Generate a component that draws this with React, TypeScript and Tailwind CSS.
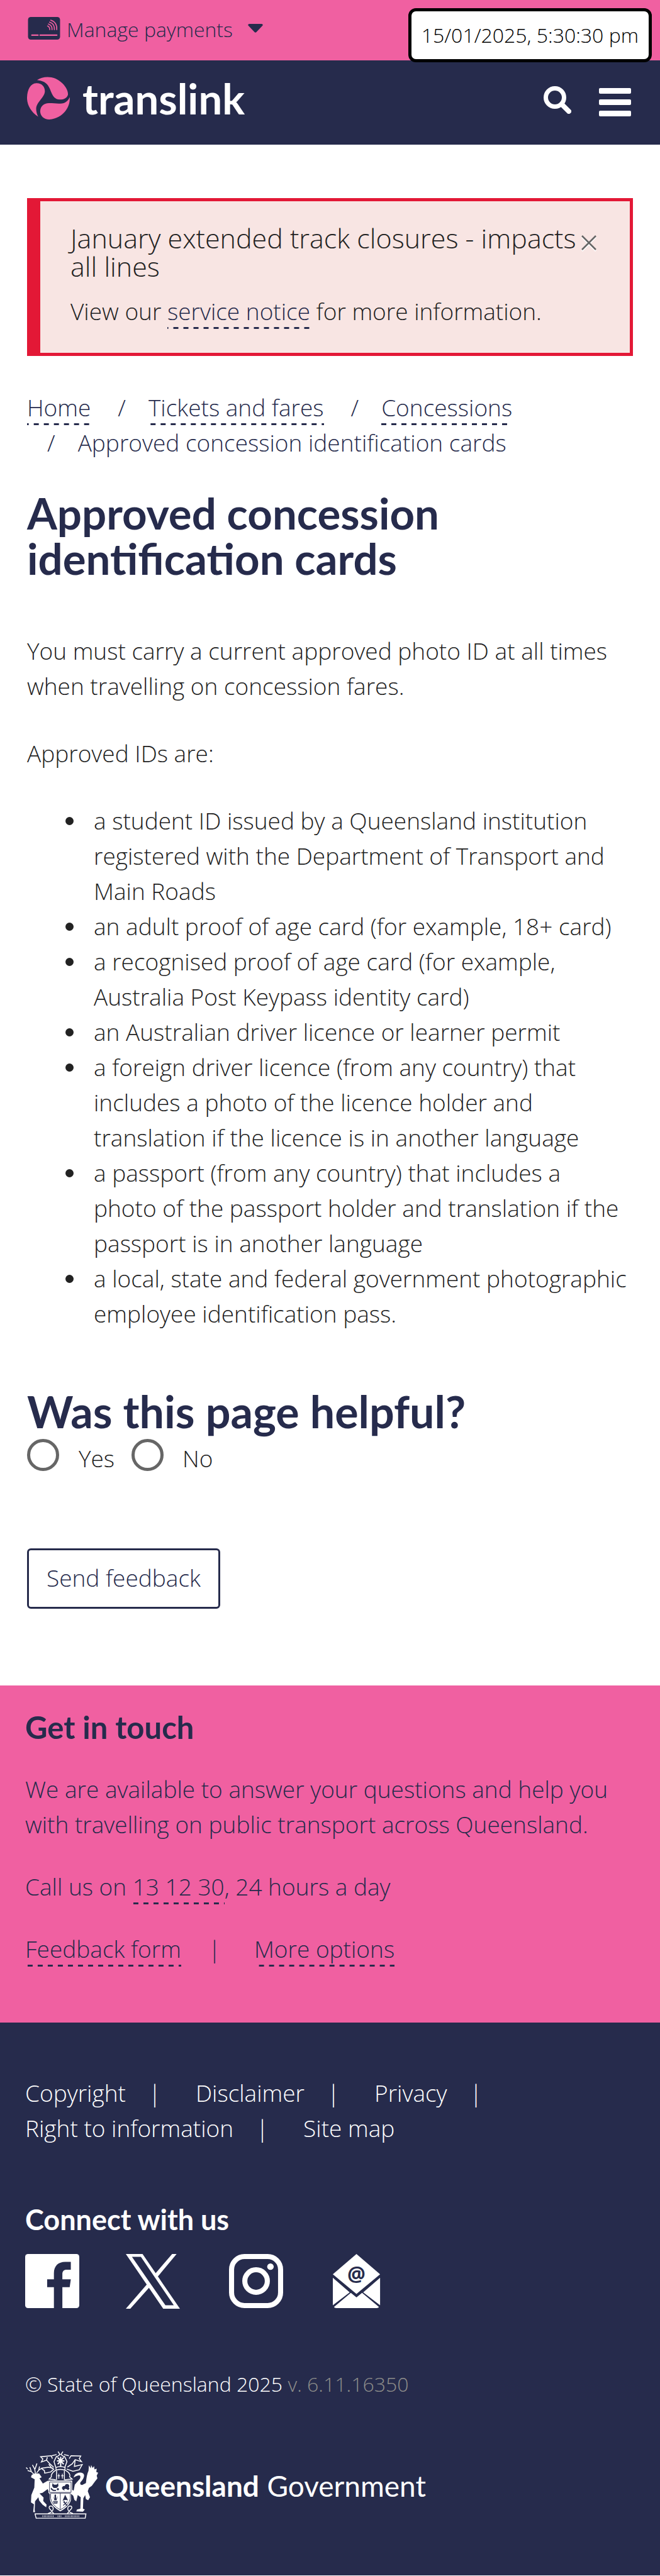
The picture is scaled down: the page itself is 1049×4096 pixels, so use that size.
import React from "react";

const dash =
  "bg-[linear-gradient(90deg,#262b4c_50%,transparent_50%)] bg-[length:16px_3px] bg-repeat-x bg-bottom pb-[3px]";

function Link({ children, href = "#" }: { children: React.ReactNode; href?: string }) {
  return (
    <a href={href} className={"text-[#262b4c] " + dash}>
      {children}
    </a>
  );
}

function PaymentIcon() {
  return (
    <svg viewBox="0 0 58 41" className="h-9 w-[52px]" aria-hidden="true">
      <rect width="58" height="41" rx="5" fill="#262b4c" />
      <g fill="none" stroke="#f060a1" strokeWidth="1.8" strokeLinecap="round">
        <path d="M35.300 16.300Q39.500 18 39.300 23M37 12.700Q44 15 43.500 23M39 9.300Q48.500 12 47.700 23M41 5.700Q53 9.500 52 23" />
      </g>
      <path d="M7 33h11M22 33h30" stroke="#f060a1" strokeWidth="2.6" strokeLinecap="round" />
    </svg>
  );
}

function TranslinkMark() {
  return (
    <svg viewBox="0 0 231 231" className="h-17 w-17" aria-hidden="true" fill="#f060a1">
      <path d="M54 18C90 -6 150 -6 190 35C216 60 224 88 220 100C212 118 195 124 175 123C150 121 140 106 130 82C118 52 108 24 54 18Z" />
      <path d="M60 216C20 190 -2 150 0 110C2 70 18 36 50 35C80 34 98 55 96 82C93 108 58 135 51 160C46 178 52 200 60 216Z" />
      <path d="M230 110C236 150 205 225 120 231C90 231 70 210 71 185C73 160 90 144 118 143C160 142 210 160 230 110Z" />
    </svg>
  );
}

function Crest() {
  return (
    <svg viewBox="54 62 394 366" className="h-27 w-[117px]" aria-hidden="true" fill="#fff">
      <path d="M96 392L100 350L84 340L86 300L102 260L104 215L84 204L88 192L104 184L128 184L142 204L130 210L148 238L176 222L188 262L186 300L174 268L146 288L130 292L152 314L150 332L168 352L166 366L146 352L128 330L124 312L106 334L104 380L106 392Z" />
      <path
        d="M100 188L86 174L66 168M86 174L78 150M66 160L58 152M108 184L104 160L92 138M106 160L116 130M114 182L126 166L130 146M126 166L138 158"
        fill="none"
        stroke="#fff"
        strokeWidth="5"
      />
      <path d="M314 206Q318 186 340 180Q364 176 370 192Q372 210 350 232Q346 246 360 246L380 236Q384 190 394 170L396 140L406 156L408 138L416 154L424 144L426 162L438 158L436 176L446 180L438 196L442 210L428 228L412 250L396 262L390 280L402 312L392 328L380 322L376 300L366 318L364 374L374 378L364 390L328 388L332 378L350 374L352 312L336 300L328 334L318 326L312 304L296 290L302 270L314 276L320 244L348 212Q354 196 344 194Q330 194 314 206Z" />
      <path d="M178 222H306V290H300V320Q298 356 242 388Q188 356 186 320V290H178Z" />
      <path
        d="M184 230H300V286H184ZM190 290H296M242 290V380M190 292V318Q196 354 242 380Q290 354 296 318V292"
        fill="none"
        stroke="#262b4c"
        strokeWidth="3"
      />
      <g fill="#262b4c">
        <path d="M200 236L208 244H222L230 236L232 252L222 262H206L198 252Z" />
        <path d="M194 260Q200 274 220 272L218 278Q196 280 190 266Z" />
        <circle cx="229" cy="269" r="6" />
        <path d="M250 262Q256 248 266 252Q270 238 284 242Q294 248 288 260L292 266L284 274Q272 262 262 270L268 276L256 272Z" />
        <path d="M204 304L210 328H222L228 304L219 322V300L215 296L211 300V322Z" />
        <path d="M203 332H228L226 346H206Z" />
        <path d="M268 298L284 330Q266 322 254 332Z" />
      </g>
      <path d="M258 336L280 356M280 336L258 356M262 332L276 358" stroke="#262b4c" strokeWidth="4" />
      <path d="M206 338H224" stroke="#fff" strokeWidth="3" />
      <g fill="none" stroke="#fff" strokeWidth="5">
        <path d="M230 66L240 82L222 96M256 66L246 82L264 96M222 82L196 88M262 82L288 88" />
        <path d="M222 90L208 120L218 152M264 90L278 120L266 152M218 152Q242 142 268 152L266 166Q242 158 220 166Z" />
        <path d="M200 104L192 88L136 94L148 106L140 122L168 112L186 132L206 150M290 104L300 88L352 90L344 104L356 120L322 110L306 132L280 150" />
        <path d="M168 112L172 96M322 110L318 146L360 136L344 164L310 172L276 160M180 134L200 160M138 156L178 150L206 156M138 156L156 168L158 182L190 176L208 160" />
        <path d="M218 166Q190 184 194 202L182 214L218 218M268 166Q300 184 292 202L306 214L266 218M222 170V220M264 170V220" />
        <path d="M234 186V212M228 196H240M253 186V212M247 196H259" strokeWidth="4" />
        <path d="M228 98L260 134M260 98L228 134M244 94V146M224 116H264" strokeWidth="7" />
        <path d="M176 400Q204 390 204 372Q200 356 186 360Q176 368 190 380L206 400M310 400Q282 390 282 372Q286 356 300 360Q310 368 296 380L280 400" />
        <path d="M106 402H380L376 425H112Z" />
      </g>
      <path
        d="M146 414H206M228 414H250M268 414H348"
        fill="none"
        stroke="#fff"
        strokeWidth="9"
        strokeDasharray="3 5"
      />
    </svg>
  );
}

const ids = [
  "a student ID issued by a Queensland institution registered with the Department of Transport and Main Roads",
  "an adult proof of age card (for example, 18+ card)",
  "a recognised proof of age card (for example, Australia Post Keypass identity card)",
  "an Australian driver licence or learner permit",
  "a foreign driver licence (from any country) that includes a photo of the licence holder and translation if the licence is in another language",
  "a passport (from any country) that includes a\nphoto of the passport holder and translation if the passport is in another language",
  "a local, state and federal government photographic employee identification pass.",
];

export default function App() {
  return (
    <div className="relative bg-white font-['Open_Sans',sans-serif] text-[37px] leading-[56px] font-light text-[#222]">
      <div className="flex h-24 items-center bg-[#f060a1] px-11 pb-[6px] text-[32px] text-[#262b4c]">
        <button type="button" className="flex items-center font-light">
          <PaymentIcon />
          <span className="ml-[10px] pt-1">Manage payments</span>
          <svg viewBox="0 0 24 14" className="ml-6 h-[14px] w-6" aria-hidden="true">
            <path d="M2 0h20q3 1 1 3L13.500 13q-1.500 1.500-3 0L1 3Q-1 1 2 0Z" fill="#262b4c" />
          </svg>
        </button>
      </div>
      <div className="absolute top-[13px] right-[13px] rounded-xl border-[5px] border-black bg-white px-4 py-[10px] text-[32px] text-black">
        15/01/2025, 5:30:30 pm
      </div>

      <header className="flex h-[134px] items-center justify-between bg-[#262b4c] pr-[46px] pb-[14px] pl-[43px]">
        <a href="#" className="flex items-center gap-5 text-white">
          <TranslinkMark />
          <span className="font-['Lato',sans-serif] text-[67px] leading-none font-bold">translink</span>
        </a>
        <div className="flex items-center gap-11 pt-3">
          <button type="button" aria-label="Search" className="pb-[6px]">
            <svg viewBox="0 0 44 44" className="h-11 w-11" fill="none" stroke="#fff" aria-hidden="true">
              <circle cx="18" cy="18" r="14.500" strokeWidth="7" />
              <path d="M29 29L40 40" strokeWidth="8" strokeLinecap="round" />
            </svg>
          </button>
          <button type="button" aria-label="Menu" className="flex flex-col gap-[9px]">
            <span className="h-[9px] w-[51px] rounded-xs bg-white" />
            <span className="h-[9px] w-[51px] rounded-xs bg-white" />
            <span className="h-[9px] w-[51px] rounded-xs bg-white" />
          </button>
        </div>
      </header>

      <main className="px-[43px] pt-[85px]">
        <section className="flex items-start justify-between border-[5px] border-l-[21px] border-[#e31836] bg-[#f8e5e3] pt-9 pr-[53px] pb-[38px] pl-12">
          <div>
            <h2 className="text-[43px] leading-[45px]">January extended track closures - impacts all lines</h2>
            <p className="mt-[21px]">
              View our <Link>service notice</Link> for more information.
            </p>
          </div>
          <button type="button" aria-label="Close" className="mt-[18px]">
            <svg viewBox="0 0 24 26" className="h-[26px] w-6" fill="none" strokeWidth="2.500" aria-hidden="true">
              <path d="M1 3L23 25M23 3L1 25" stroke="#fff" />
              <path d="M1 1L23 23M23 1L1 23" stroke="#666" />
            </svg>
          </button>
        </section>

        <nav aria-label="Breadcrumb" className="mt-[54px]">
          <ol className="flex flex-wrap gap-x-[11px] text-[#262b4c]">
            <li>
              <Link>Home</Link>
            </li>
            <li className="pl-8">
              <span className="pr-9">/</span>
              <Link>Tickets and fares</Link>
            </li>
            <li className="pl-8">
              <span className="pr-9">/</span>
              <Link>Concessions</Link>
            </li>
            <li className="pl-8">
              <span className="pr-9">/</span>Approved concession identification cards
            </li>
          </ol>
        </nav>

        <h1 className="mt-12 max-w-[800px] font-['Lato',sans-serif] text-[69px] leading-[72px] font-bold text-[#262b4c]">
          Approved concession identification cards
        </h1>

        <p className="mt-[83px]">
          You must carry a current approved photo ID at all times when travelling on concession fares.
        </p>
        <p className="mt-[51px]">Approved IDs are:</p>
        <ul className="mt-[51px] pl-[61px]">
          {ids.map((t) => (
            <li key={t} className="flex gap-8 whitespace-pre-line">
              <span className="mt-[22px] h-[13px] w-[13px] shrink-0 rounded-full bg-[#222]" />
              <span>{t}</span>
            </li>
          ))}
        </ul>

        <form className="pb-[122px]">
          <fieldset>
            <legend className="pt-[91px] font-['Lato',sans-serif] text-[70px] leading-[72px] font-bold text-[#262b4c]">
              Was this page helpful?
            </legend>
            <div className="flex items-start pt-2">
              <input id="yes" name="helpful" type="radio" className="h-[51px] w-[51px] appearance-none rounded-full border-[5px] border-[#666]" />
              <label htmlFor="yes" className="pt-[3px] pr-[27px] pl-[31px]">Yes</label>
              <input id="no" name="helpful" type="radio" className="h-[51px] w-[51px] appearance-none rounded-full border-[5px] border-[#666]" />
              <label htmlFor="no" className="pt-[3px] pl-[30px]">No</label>
            </div>
          </fieldset>
          <button type="button" className="mt-[115px] rounded-md border-[3px] border-[#262b4c] px-7 pt-4 pb-[18px] font-light text-[#262b4c]">
            Send feedback
          </button>
        </form>
      </main>

      <section className="bg-[#f060a1] px-10 pt-9 pb-[89px] text-[#262b4c]">
        <h2 className="font-['Lato',sans-serif] text-[49px] leading-[60px] font-bold">Get in touch</h2>
        <p className="mt-[41px]">
          We are available to answer your questions and help you with travelling on public transport across Queensland.
        </p>
        <p className="mt-[43px]">
          Call us on <Link>13 12 30</Link>, 24 hours a day
        </p>
        <p className="mt-[43px] flex">
          <span><Link>Feedback form</Link></span>
          <span className="pr-[53px] pl-[43px]">|</span>
          <span><Link>More options</Link></span>
        </p>
      </section>

      <footer className="bg-[#262b4c] px-10 pt-[84px] pb-[90px] text-white">
        <ul className="flex max-w-[800px] flex-wrap">
          {["Copyright", "Disclaimer", "Privacy", "Right to information"].map((t) => (
            <li key={t}>
              <a href="#">{t}</a>
              <span className="pr-[55px] pl-9">|</span>
            </li>
          ))}
          <li>
            <a href="#">Site map</a>
          </li>
        </ul>
        <h2 className="mt-[87px] font-['Lato',sans-serif] text-[45px] leading-[60px] font-bold">Connect with us</h2>
        <div className="mt-[25px] flex">
          <a href="#" aria-label="Facebook" className="mr-[74px]">
            <svg viewBox="0 0 96 96" className="h-[86px] w-[86px]" aria-hidden="true">
              <rect width="96" height="96" rx="5" fill="#fff" />
              <path d="M51 96V59H39V45H51V34C51 21 59 14 71 14H81V28H74C68 28 66 31 66 36V45H81L79 59H66V96Z" fill="#262b4c" />
            </svg>
          </a>
          <a href="#" aria-label="X" className="mr-[78px]">
            <svg viewBox="0 0 97 98" className="h-[87px] w-[86px]" aria-hidden="true" fill="#fff">
              <path fillRule="evenodd" d="M0 0H30L97 98H67ZM11 5L71 92H86L27 5Z" />
              <path d="M83 0H91L56 42L52 36ZM0 98L39 53L43 59L8 98Z" />
            </svg>
          </a>
          <a href="#" aria-label="Instagram" className="mr-[79px]">
            <svg viewBox="0 0 96 96" className="h-[86px] w-[86px]" aria-hidden="true" fill="none" stroke="#fff" strokeWidth="9">
              <rect x="4.500" y="4.500" width="87" height="87" rx="23" />
              <circle cx="48" cy="48" r="20" />
              <circle cx="73.500" cy="22.500" r="5.800" fill="#fff" stroke="none" />
            </svg>
          </a>
          <a href="#" aria-label="Email">
            <svg viewBox="0 0 85 96" className="h-[86px] w-[76px]" aria-hidden="true" fill="#fff">
              <path d="M42 0L84 36L42 71L0 36Z" />
              <path d="M0 42L30 68L0 91ZM84 42L54 68L84 91ZM32 69L42 77L52 69L82 94Q81 96 78 96H6Q3 96 2 94Z" />
              <text x="42" y="48" textAnchor="middle" fontFamily="Open Sans" fontWeight="700" fontSize="36" fill="#262b4c">@</text>
            </svg>
          </a>
        </div>
        <p className="mt-[92px] text-[32px]">
          © State of Queensland 2025 <span className="text-[#8d8d8a]">v. 6.11.16350</span>
        </p>
        <div className="mt-[78px] flex items-center gap-[10px]">
          <Crest />
          <span className="pt-1 font-['Lato',sans-serif] text-[46px]">
            <span className="font-bold">Queensland</span> <span className="font-normal">Government</span>
          </span>
        </div>
      </footer>
    </div>
  );
}
